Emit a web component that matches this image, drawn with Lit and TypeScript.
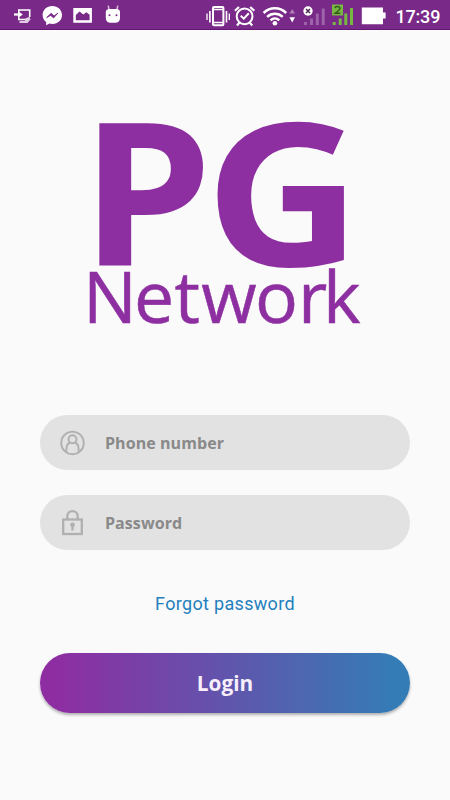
import { LitElement, html, css } from "lit";
import { customElement, property } from "lit/decorators.js";

@customElement("status-bar")
class StatusBar extends LitElement {
  static styles = css`
    :host { display: flex; height: 30px; box-sizing: border-box; background: #792987; border-bottom: 1px solid #651674; color: #fff; }
    .icons { display: block; width: 390px; height: 30px; flex: none; }
    .clock { font: 500 18px/33px Roboto, sans-serif; padding-left: 5.5px; white-space: nowrap; letter-spacing: -0.2px; }
  `;
  render() {
    return html`
      <svg class="icons" viewBox="0 0 390 30" fill="none" stroke="#fff">
        <!-- screen share -->
        <path d="M18.8 12V10H29.700V17M18.800 17.300V19.500H25M19.500 22H25" stroke-width="1.600" />
        <path d="M14 14.500H20" stroke-width="2.200" />
        <path d="M18 11L22.800 14.500L18 18Z" fill="#fff" stroke="none" />
        <path d="M25 18.500L29.500 16.800L30.500 19.500L27.500 23H25Z" fill="#e3cce6" stroke="none" />
        <!-- messenger -->
        <path d="M52.3 6C46.8 6 42.6 9.9 42.6 15C42.6 18 44 20.5 46.2 22.1V25.3L49.5 23.6C57 25.2 62 20.6 62 15C62 9.9 57.8 6 52.3 6Z" fill="#fff" stroke="none" />
        <path d="M46.7 17.5L51.2 13.2L54 16L58 13L53.6 17.9L50.7 15.4Z" fill="#792987" stroke="#792987" stroke-width=".8" />
        <!-- picture -->
        <path d="M73.3 8H91.9V22.8H73.3ZM75.8 20.3H89.6V14.7L86.3 12.2L83.4 14.4L79.5 11.6L75.8 15Z" fill="#fff" fill-rule="evenodd" stroke="none" />
        <!-- android head -->
        <path d="M108.2 5.600L109.2 10M117.8 5.600L116.8 10" stroke="#d9b9de" stroke-width="1.5" />
        <path d="M105.8 12Q105.8 9 110 9H116Q120 9 120 12V18Q120 22.8 115 22.8H110.8Q105.8 22.8 105.8 18Z" fill="#fff" stroke="none" />
        <circle cx="109.500" cy="15.300" r="1" fill="#792987" stroke="none" />
        <circle cx="116.500" cy="15.300" r="1" fill="#792987" stroke="none" />
        <!-- vibrate -->
        <rect x="213" y="7" width="10.4" height="18.3" rx="1" stroke-width="2" />
        <path d="M213 9.500H223.4M213 22.500H223.4" stroke-width="1.7" />
        <path d="M209.9 11V22.500M226.5 11V22.500" stroke-width="1.6" />
        <path d="M207 13.500V20M229.3 13.500V20" stroke-width="1.3" />
        <!-- alarm -->
        <circle cx="244.6" cy="16.300" r="7.900" stroke-width="2" />
        <path d="M240.7 15.800L243.8 18.700L248.8 13.300" stroke-width="2" />
        <path d="M234.9 10.800L239 7M250.2 7L254.3 10.800M239.5 22.500L237 25.500M249.7 22.500L252.2 25.500" stroke-width="2.2" />
        <!-- wifi -->
        <path d="M263.600 13C270 6.700 279.800 6.700 286.200 13M267.100 16.900C271.500 12.700 278.300 12.700 282.700 16.900M270.500 20.300C273 18 276.800 18 279.300 20.300" stroke-width="2.500" />
        <circle cx="274.900" cy="23.300" r="2.300" fill="#fff" stroke="none" />
        <path d="M289.500 13.500L292.200 9L295 13.500Z" fill="#b27fbb" stroke="none" />
        <path d="M289.500 17.200H295L292.200 22.500Z" fill="#fff" stroke="none" />
        <!-- empty signal -->
        <path d="M305.500 22V25M311.500 18.500V25M317.300 13.500V25M323.200 8.500V25" stroke="#9e63aa" stroke-width="3" />
        <circle cx="308" cy="11" r="4.700" fill="#fff" stroke="none" />
        <path d="M306 9L310 13M310 9L306 13" stroke="#4d2856" stroke-width="1.500" />
        <!-- green signal -->
        <path d="M334.200 22V25M340.200 18.500V25M345.800 13.500V25M351.500 8V25" stroke="#77b843" stroke-width="3" />
        <rect x="332" y="4.500" width="11" height="11" fill="#77b843" stroke="none" />
        <path d="M335 8.200Q335.200 6.500 337.500 6.500Q340 6.500 340 8.500Q340 9.600 335.200 13.300H340.300" stroke="#35581b" stroke-width="1.400" />
        <!-- battery -->
        <path d="M361.800 7.500H383V12.500H385.600V18.500H383V24.200H361.800Z" fill="#fff" stroke="none" />
      </svg>
      <span class="clock">17:39</span>
    `;
  }
}

@customElement("pill-field")
class PillField extends LitElement {
  @property() label = "";
  @property() icon = "user";
  static styles = css`
    :host { display: flex; align-items: center; height: 55px; border-radius: 28px; background: #e2e2e2; box-sizing: border-box; padding-left: 19px; }
    .icon { width: 28px; height: 30px; flex: none; fill: none; stroke: #b0b0b0; }
    .label { margin-left: 18px; font: 700 16px/22px "Open Sans", sans-serif; letter-spacing: .07px; color: #898989; white-space: nowrap; }
  `;
  render() {
    return html`
      ${this.icon === "user"
        ? html`<svg class="icon" viewBox="0 0 28 30" stroke-width="1.900">
            <circle cx="13.500" cy="14.900" r="11.300" />
            <circle cx="13.500" cy="11.300" r="4" />
            <path d="M7.400 23.500V21Q7.400 15.800 11.300 14.500M19.600 23.500V21Q19.600 15.800 15.700 14.500" />
          </svg>`
        : html`<svg class="icon" viewBox="0 0 28 30" stroke-width="2.300">
            <rect x="4.200" y="11.500" width="18.600" height="14.500" />
            <path d="M8.300 11.500V8.300A5.200 5.200 0 0 1 18.700 8.300V11.500" />
            <circle cx="13.500" cy="16.800" r="2.400" fill="#b0b0b0" stroke="none" />
            <path d="M13.500 17V22.500" />
          </svg>`}
      <span class="label">${this.label}</span>
    `;
  }
}

@customElement("app-root")
class AppRoot extends LitElement {
  static styles = css`
    :host { display: flex; flex-direction: column; height: 800px; background: #fafafa; overflow: hidden; }
    .logo { display: block; width: 450px; height: 310px; flex: none; overflow: visible; fill: #8d2fa1; font-family: "Open Sans", sans-serif; }
    .big { font-size: 200px; font-weight: 700; }
    .small { font-size: 71.5px; font-weight: 400; stroke: #8d2fa1; stroke-width: .5px; }
    .form { display: flex; flex-direction: column; padding: 75px 40px 0; gap: 25px; }
    .forgot { align-self: center; margin-top: 17px; font: 400 18px/24px Roboto, sans-serif; letter-spacing: .32px; color: #2380bd; text-decoration: none; }
    .login { margin-top: 12px; height: 60px; border: 0; border-radius: 30px; color: #f7eefa; background: linear-gradient(90deg, #8e2da2 4%, #347cb6 96%); font: 700 20.8px/61px "Open Sans", sans-serif; padding: 0; box-shadow: 0 2px 3px rgba(0,0,0,.3); }
  `;
  render() {
    return html`
      <status-bar></status-bar>
      <svg class="logo" viewBox="0 30 450 310">
        <text class="big" transform="translate(80.500 266) scale(1.05 1)">P</text>
        <text class="big" transform="translate(205 266) scale(1.078 1)">G</text>
        <text class="small" x="83 134 174.5 201.2 255 298 323" y="323">Network</text>
      </svg>
      <div class="form">
        <pill-field label="Phone number" icon="user"></pill-field>
        <pill-field label="Password" icon="lock"></pill-field>
        <a class="forgot">Forgot password</a>
        <button class="login">Login</button>
      </div>
    `;
  }
}
